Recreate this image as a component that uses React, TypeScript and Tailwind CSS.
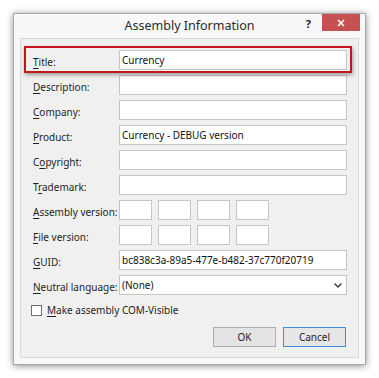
import React from "react";

const font = { fontFamily: '"Noto Sans", "Open Sans", sans-serif' };

function Label({ pre = "", u, rest }: { pre?: string; u: string; rest: string }) {
  return (
    <span className="text-[10px] text-[#1e1e1e] whitespace-nowrap">
      {pre}
      <span className="underline underline-offset-2">{u}</span>
      {rest}
    </span>
  );
}

function Box({ value = "", w = "w-[229px]" }: { value?: string; w?: string }) {
  return (
    <div className={`${w} h-[20px] bg-white border border-[#c6c6c6] flex items-center px-[2px] text-[10px] text-[#111]`}>
      {value}
    </div>
  );
}

function Row({ label, children }: { label: React.ReactNode; children: React.ReactNode }) {
  return (
    <div className="flex items-center h-[20px]">
      <div className="w-[86px] shrink-0">{label}</div>
      {children}
    </div>
  );
}

export default function App() {
  return (
    <div className="w-[379px] h-[378px] bg-white pl-[13px] pt-[13px]" style={font}>
      <div className="w-[353px] h-[352px] bg-[#f8f8f8] border border-[#a8a8a8] shadow-[0_1px_7px_rgba(0,0,0,0.45)] flex flex-col">
        <div className="grid grid-cols-[1fr_auto_1fr] h-[24px] shrink-0">
          <div />
          <div className="text-[12.5px] text-[#2b2b2b] pt-[3px]">Assembly Information</div>
          <div className="flex justify-end items-start pr-[5px]">
            <span className="text-[11px] font-bold text-[#222] mt-[2px] mr-[11px]">?</span>
            <div className="w-[38px] h-[17px] bg-[#c75050] flex items-center justify-center">
              <svg width="8" height="8" viewBox="0 0 8 8">
                <path d="M1 1 L7 7 M7 1 L1 7" stroke="white" strokeWidth="1.6" />
              </svg>
            </div>
          </div>
        </div>

        <div className="relative mx-[6px] mb-[6px] flex-1 bg-[#f0f0f0] border border-[#d9d9d9] pt-[11px] pl-[12px] pr-[11px] flex flex-col">
          <div className="absolute left-[3px] top-[7px] w-[328px] h-[27px] border-2 border-[#c4161c] shadow-[1px_2px_4px_rgba(0,0,0,0.35)]" />

          <div className="flex flex-col gap-[5px]">
            <Row label={<Label u="T" rest="itle:" />}>
              <Box value="Currency" />
            </Row>
            <Row label={<Label u="D" rest="escription:" />}>
              <Box />
            </Row>
            <Row label={<Label u="C" rest="ompany:" />}>
              <Box />
            </Row>
            <Row label={<Label u="P" rest="roduct:" />}>
              <Box value="Currency - DEBUG version" />
            </Row>
            <Row label={<Label pre="C" u="o" rest="pyright:" />}>
              <Box />
            </Row>
            <Row label={<Label pre="T" u="r" rest="ademark:" />}>
              <Box />
            </Row>
            <Row label={<Label u="A" rest="ssembly version:" />}>
              <div className="flex gap-[6px]">
                <Box w="w-[33px]" />
                <Box w="w-[33px]" />
                <Box w="w-[33px]" />
                <Box w="w-[33px]" />
              </div>
            </Row>
            <Row label={<Label u="F" rest="ile version:" />}>
              <div className="flex gap-[6px]">
                <Box w="w-[33px]" />
                <Box w="w-[33px]" />
                <Box w="w-[33px]" />
                <Box w="w-[33px]" />
              </div>
            </Row>
            <Row label={<Label u="G" rest="UID:" />}>
              <Box value="bc838c3a-89a5-477e-b482-37c770f20719" />
            </Row>
            <Row label={<Label u="N" rest="eutral language:" />}>
              <div className="w-[229px] h-[20px] bg-white border border-[#c6c6c6] flex items-center justify-between px-[2px] text-[10px] text-[#111]">
                <span>(None)</span>
                <svg width="8" height="5" viewBox="0 0 8 5" className="mr-[2px]">
                  <path d="M0.5 0.5 L4 4 L7.5 0.5" stroke="#333" strokeWidth="1.3" fill="none" />
                </svg>
              </div>
            </Row>
          </div>

          <div className="flex items-center gap-[5px] mt-[8px] -ml-[2px]">
            <div className="w-[11px] h-[11px] bg-white border border-[#707070]" />
            <Label u="M" rest="ake assembly COM-Visible" />
          </div>

          <div className="flex justify-end gap-[7px] mt-[9px] pr-[1px]">
            <div className="w-[63px] h-[20px] bg-[#e3e3e3] border border-[#adadad] flex items-center justify-center text-[10px] text-[#1e1e1e]">
              OK
            </div>
            <div className="w-[63px] h-[20px] bg-[#e6e6e6] border border-[#3c8fe0] flex items-center justify-center text-[10px] text-[#1e1e1e]">
              Cancel
            </div>
          </div>
        </div>
      </div>
    </div>
  );
}
